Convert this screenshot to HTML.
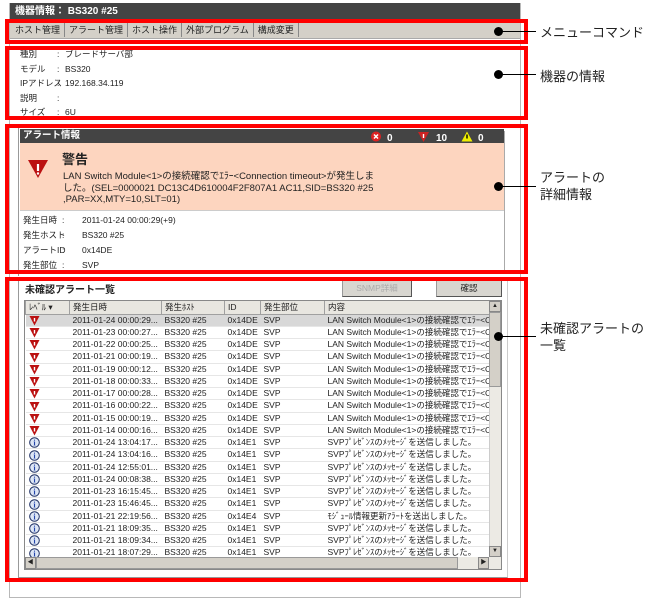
<!DOCTYPE html>
<html><head><meta charset="utf-8"><style>
*{margin:0;padding:0;box-sizing:border-box}
body{width:656px;height:601px;background:#fff;position:relative;overflow:hidden;font-family:"Liberation Sans","Noto Sans CJK JP",sans-serif;font-size:9px;color:#222}
.a{position:absolute;white-space:nowrap}
.red{position:absolute;border:4px solid #f00}
.lbl{font-size:13px;color:#222}
.dot{position:absolute;width:9px;height:9px;border-radius:50%;background:#000}
.ln{position:absolute;height:1px;background:#000}
table{border-collapse:collapse;table-layout:fixed}
td{height:12.1px;font-size:8.5px;padding:0 0 0 3px;border-bottom:1px solid #e6e6e6;white-space:nowrap;overflow:hidden;line-height:11px}
th{height:13px;font-size:8.5px;font-weight:normal;text-align:left;padding-left:3px;background:#e8e6e0;border:1px solid #a0a0a0;border-top:none;white-space:nowrap}
.ic{display:inline-block;vertical-align:middle}
</style></head><body>
<div class="a" style="left:9px;top:3px;width:512px;height:595px;border:1px solid #b8b8b8;border-top:none;background:#fff"></div>
<div class="a" style="left:10px;top:3px;width:510px;height:17px;background:#444;color:#fff;font-weight:bold;font-size:10px;line-height:17px;padding-left:5px">機器情報： BS320 #25</div>
<div class="a" style="left:10px;top:21px;width:510px;height:18px;background:#d4d0c8;border-bottom:1px solid #aaa"></div>
<div class="a" style="left:11px;top:23px;font-size:9px;line-height:14px">
<span style="display:inline-block;border-right:1px solid #888;padding:0 4px">ホスト管理</span><span style="display:inline-block;border-right:1px solid #888;padding:0 4px">アラート管理</span><span style="display:inline-block;border-right:1px solid #888;padding:0 4px">ホスト操作</span><span style="display:inline-block;border-right:1px solid #888;padding:0 4px">外部プログラム</span><span style="display:inline-block;border-right:1px solid #888;padding:0 4px">構成変更</span></div>
<div class="a" style="left:20px;top:47px;line-height:14.5px;font-size:8.5px">種別<br>モデル<br>IPアドレス<br>説明<br>サイズ</div>
<div class="a" style="left:57px;top:47px;line-height:14.5px;font-size:8.5px">:<br>:<br>:<br>:<br>:</div>
<div class="a" style="left:65px;top:47px;line-height:14.5px;font-size:8.5px">ブレードサーバ部<br>BS320<br>192.168.34.119<br><br>6U</div>
<div class="a" style="left:18px;top:126px;width:1px;height:150px;background:#999"></div>
<div class="a" style="left:20px;top:129px;width:484px;height:14px;background:#444;color:#fff;font-size:9.5px;font-weight:bold;line-height:14px;padding-left:3px">アラート情報</div>
<svg class="a" style="left:370px;top:130px" width="140" height="13">
<circle cx="6" cy="6.5" r="5" fill="#d22"/><path d="M4 4.5l4 4M8 4.5l-4 4" stroke="#fff" stroke-width="1.5"/>
<text x="17" y="11" fill="#fff" font-size="10" font-weight="bold" font-family="Liberation Sans">0</text>
<path d="M48 2h11l-5.5 10z" fill="#c22"/><path d="M53.5 4v4" stroke="#fff" stroke-width="1.4"/>
<text x="66" y="11" fill="#fff" font-size="10" font-weight="bold" font-family="Liberation Sans">10</text>
<path d="M97 1.5l5.5 10h-11z" fill="#ee0"/><path d="M97 4.5v4" stroke="#000" stroke-width="1.4"/>
<text x="108" y="11" fill="#fff" font-size="10" font-weight="bold" font-family="Liberation Sans">0</text>
</svg>
<div class="a" style="left:20px;top:143px;width:484px;height:68px;background:#fdd5bf;border-bottom:1px solid #ccc"></div>
<svg class="a" style="left:27px;top:159px" width="22" height="20"><path d="M1 1h20l-10 18z" fill="#b11"/><path d="M11 5v7" stroke="#fff" stroke-width="2.2"/><circle cx="11" cy="14.5" r="1.2" fill="#fff"/></svg>
<div class="a" style="left:62px;top:149px;font-size:13px;font-weight:bold">警告</div>
<div class="a" style="left:63px;top:171px;font-size:9.5px;line-height:11.5px">LAN Switch Module&lt;1&gt;の接続確認でｴﾗｰ&lt;Connection timeout&gt;が発生しま<br>した。(SEL=0000021 DC13C4D610004F2F807A1 AC11,SID=BS320 #25<br>,PAR=XX,MTY=10,SLT=01)</div>
<div class="a" style="left:23px;top:213px;line-height:15px;font-size:8.5px">発生日時<br>発生ホスト<br>アラートID<br>発生部位</div>
<div class="a" style="left:62px;top:213px;line-height:15px;font-size:8.5px">:<br>:<br>:<br>:</div>
<div class="a" style="left:82px;top:213px;line-height:15px;font-size:8.5px">2011-01-24 00:00:29(+9)<br>BS320 #25<br>0x14DE<br>SVP</div>
<div class="a" style="left:504px;top:131px;width:1px;height:142px;background:#aaa"></div>
<div class="a" style="left:18px;top:278px;width:490px;height:300px;border:1px solid #999;border-top:none;border-right-color:#ccc"></div>
<div class="a" style="left:25px;top:281px;font-size:10px;font-weight:bold">未確認アラート一覧</div>
<div class="a" style="left:342px;top:280px;width:70px;height:17px;background:#d8d6d0;border:1px solid #999;border-right-color:#555;border-bottom-color:#555;color:#aaa;font-size:8.5px;text-align:center;line-height:15px">SNMP詳細</div>
<div class="a" style="left:436px;top:280px;width:66px;height:17px;background:#d8d6d0;border:1px solid #999;border-right-color:#555;border-bottom-color:#555;font-size:8.5px;text-align:center;line-height:15px">確認</div>
<div class="a" style="left:24px;top:300px;width:478px;height:270px;border:1px solid #888;overflow:hidden;background:#fff">
<table style="width:465px">
<colgroup><col style="width:44px"><col style="width:92px"><col style="width:63px"><col style="width:36px"><col style="width:64px"><col style="width:166px"></colgroup>
<tr><th>ﾚﾍﾞﾙ ▾</th><th>発生日時</th><th>発生ﾎｽﾄ</th><th>ID</th><th>発生部位</th><th>内容</th></tr>
<tbody id="tb"></tbody>
</table>
</div>
<div class="a" style="left:489px;top:301px;width:12px;height:256px;background:#eceae4;border-left:1px solid #ccc"></div>
<div class="a" style="left:489px;top:301px;width:12px;height:11px;background:#d4d0c8;border:1px solid #888;font-size:6px;text-align:center;line-height:9px">▲</div>
<div class="a" style="left:489px;top:312px;width:12px;height:75px;background:#d4d0c8;border:1px solid #999"></div>
<div class="a" style="left:489px;top:546px;width:12px;height:11px;background:#d4d0c8;border:1px solid #888;font-size:6px;text-align:center;line-height:9px">▼</div>
<div class="a" style="left:25px;top:557px;width:476px;height:12px;background:#eceae4"></div>
<div class="a" style="left:25px;top:557px;width:11px;height:12px;background:#d4d0c8;border:1px solid #888;font-size:6px;text-align:center;line-height:10px">◀</div>
<div class="a" style="left:36px;top:557px;width:422px;height:12px;background:#d4d0c8;border:1px solid #999"></div>
<div class="a" style="left:478px;top:557px;width:11px;height:12px;background:#d4d0c8;border:1px solid #888;font-size:6px;text-align:center;line-height:10px">▶</div>
<div class="red" style="left:5px;top:19px;width:523px;height:25px"></div>
<div class="red" style="left:5px;top:46px;width:523px;height:74px"></div>
<div class="red" style="left:5px;top:124px;width:523px;height:150px"></div>
<div class="red" style="left:5px;top:277px;width:523px;height:305px"></div>
<div class="dot" style="left:494px;top:27px"></div><div class="ln" style="left:500px;top:31px;width:36px"></div>
<div class="a lbl" style="left:540px;top:22px">メニューコマンド</div>
<div class="dot" style="left:494px;top:70px"></div><div class="ln" style="left:500px;top:74px;width:36px"></div>
<div class="a lbl" style="left:540px;top:66px">機器の情報</div>
<div class="dot" style="left:494px;top:182px"></div><div class="ln" style="left:500px;top:186px;width:36px"></div>
<div class="a lbl" style="left:540px;top:169px;line-height:17px">アラートの<br>詳細情報</div>
<div class="dot" style="left:494px;top:332px"></div><div class="ln" style="left:500px;top:336px;width:36px"></div>
<div class="a lbl" style="left:540px;top:320px;line-height:17px">未確認アラートの<br>一覧</div>
<script>
var W='<svg class="ic" width="11" height="11"><path d="M0.5 1h10l-5 9.5z" fill="#b11"/><path d="M5.5 3v3.5" stroke="#fff" stroke-width="1.4"/></svg>';
var I='<svg class="ic" width="11" height="11"><circle cx="5.5" cy="5.5" r="4.8" fill="#dde6f5" stroke="#236" stroke-width="1"/><text x="5.5" y="8.6" font-size="8" text-anchor="middle" fill="#24a" font-weight="bold" font-family="Liberation Serif">i</text></svg>';
var d1=["2011-01-24 00:00:29...","2011-01-23 00:00:27...","2011-01-22 00:00:25...","2011-01-21 00:00:19...","2011-01-19 00:00:12...","2011-01-18 00:00:33...","2011-01-17 00:00:28...","2011-01-16 00:00:22...","2011-01-15 00:00:19...","2011-01-14 00:00:16..."];
var d2=["2011-01-24 13:04:17...","2011-01-24 13:04:16...","2011-01-24 12:55:01...","2011-01-24 00:08:38...","2011-01-23 16:15:45...","2011-01-23 15:46:45...","2011-01-21 22:19:56...","2011-01-21 18:09:35...","2011-01-21 18:09:34...","2011-01-21 18:07:29..."];
var h='';
d1.forEach(function(d,i){h+='<tr'+(i==0?' style="background:#d8d8d8"':'')+'><td>'+W+'</td><td>'+d+'</td><td>BS320 #25</td><td>0x14DE</td><td>SVP</td><td>LAN Switch Module&lt;1&gt;の接続確認でｴﾗｰ&lt;Cor</td></tr>';});
d2.forEach(function(d,i){var m=i==6;h+='<tr><td>'+I+'</td><td>'+d+'</td><td>BS320 #25</td><td>'+(m?'0x14E4':'0x14E1')+'</td><td>SVP</td><td>'+(m?'ﾓｼﾞｭｰﾙ情報更新ｱﾗｰﾄを送出しました。':'SVPﾌﾟﾚｾﾞﾝｽのﾒｯｾｰｼﾞを送信しました。')+'</td></tr>';});
document.getElementById('tb').innerHTML=h;
</script>
</body></html>
